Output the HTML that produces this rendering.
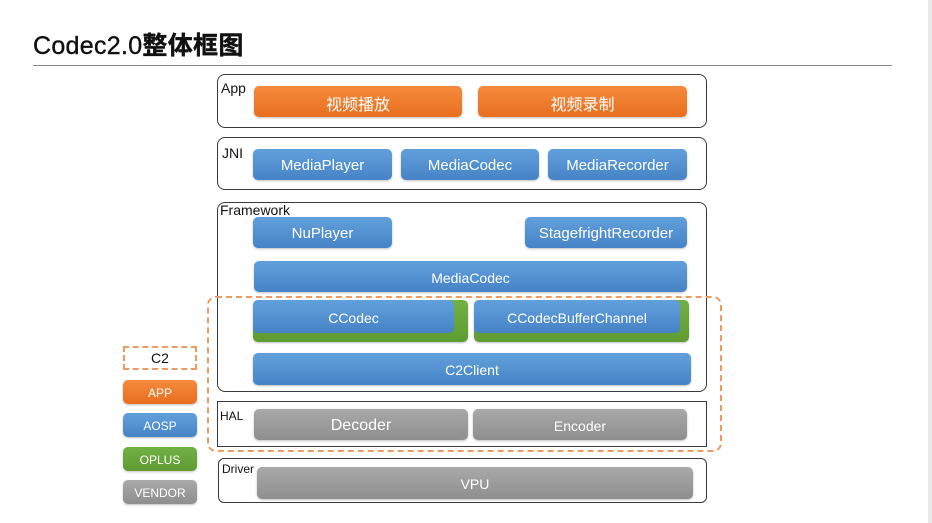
<!DOCTYPE html>
<html><head><meta charset="utf-8"><style>
*{margin:0;padding:0;box-sizing:border-box}
body{width:932px;height:523px;background:#fff;position:relative;overflow:hidden;font-family:"Liberation Sans","Noto Sans CJK SC",sans-serif}
.a{position:absolute}
.box{position:absolute;border:1px solid #3a3a3a;border-radius:8px;background:#fff}
.lbl{position:absolute;font-size:13px;color:#111}
.b{position:absolute;color:#fff;display:flex;align-items:center;justify-content:center;border-radius:5px;font-size:15px;box-shadow:0 1px 2px rgba(0,0,0,.25);padding-top:2px}
.bl{background:linear-gradient(#62a0dc,#4583c6)}
.or{background:linear-gradient(#f68a3c,#e86f1f)}
.gr{background:linear-gradient(#a9a9a9,#8e8e8e)}
.gn{background:linear-gradient(#71b043,#5e9c32)}
</style></head><body>
<div class="a" style="left:33px;top:26px;font-size:25px;color:#111;letter-spacing:0.3px;-webkit-text-stroke:0.4px #111">Codec2.0<b style="font-weight:bold">整体框图</b></div>
<div class="a" style="left:33px;top:65px;width:859px;height:1px;background:#888"></div>
<div class="a" style="left:928px;top:0;width:4px;height:523px;background:#e8e8e8"></div>

<div class="box" style="left:217px;top:74px;width:490px;height:54px"></div>
<div class="lbl" style="left:221px;top:80px;font-size:14px">App</div>
<div class="b or" style="left:254px;top:86px;width:208px;height:31px;font-size:16px">视频播放</div>
<div class="b or" style="left:478px;top:86px;width:209px;height:31px;font-size:16px">视频录制</div>

<div class="box" style="left:217px;top:137px;width:490px;height:53px"></div>
<div class="lbl" style="left:222px;top:145px;font-size:14px">JNI</div>
<div class="b bl" style="left:253px;top:149px;width:139px;height:31px">MediaPlayer</div>
<div class="b bl" style="left:401px;top:149px;width:138px;height:31px">MediaCodec</div>
<div class="b bl" style="left:548px;top:149px;width:139px;height:31px">MediaRecorder</div>

<div class="box" style="left:217px;top:202px;width:490px;height:190px"></div>
<div class="lbl" style="left:220px;top:202px;font-size:14px">Framework</div>
<div class="b bl" style="left:253px;top:217px;width:139px;height:31px">NuPlayer</div>
<div class="b bl" style="left:525px;top:217px;width:162px;height:31px">StagefrightRecorder</div>
<div class="b bl" style="left:254px;top:261px;width:433px;height:31px;font-size:14px">MediaCodec</div>

<div class="b gn" style="left:253px;top:300px;width:215px;height:42px"></div>
<div class="b bl" style="left:253px;top:300px;width:201px;height:33px;box-shadow:none;font-size:14px">CCodec</div>
<div class="b gn" style="left:474px;top:300px;width:215px;height:42px"></div>
<div class="b bl" style="left:474px;top:300px;width:206px;height:33px;box-shadow:none;font-size:14px">CCodecBufferChannel</div>
<div class="b bl" style="left:253px;top:353px;width:438px;height:32px;font-size:14px">C2Client</div>

<div class="a" style="left:217px;top:401px;width:490px;height:46px;border:1px solid #3a3a3a;background:#fff"></div>
<div class="lbl" style="left:220px;top:409px;font-size:12px">HAL</div>
<div class="b gr" style="left:254px;top:409px;width:214px;height:31px;font-size:16px">Decoder</div>
<div class="b gr" style="left:473px;top:409px;width:214px;height:31px;font-size:14px">Encoder</div>

<div class="a" style="left:207px;top:296px;width:515px;height:156px;border:2px dashed #ee9a60;border-radius:9px"></div>

<div class="box" style="left:218px;top:458px;width:489px;height:45px;border-radius:6px"></div>
<div class="lbl" style="left:222px;top:462px;font-size:12px">Driver</div>
<div class="b gr" style="left:257px;top:467px;width:436px;height:32px;font-size:14px">VPU</div>

<div class="a" style="left:123px;top:346px;width:74px;height:24px;border:2px dashed #ee9a60;display:flex;align-items:center;justify-content:center;font-size:14px;color:#111">C2</div>
<div class="b or" style="left:123px;top:380px;width:74px;height:24px;font-size:12px">APP</div>
<div class="b bl" style="left:123px;top:413px;width:74px;height:24px;font-size:12px">AOSP</div>
<div class="b gn" style="left:123px;top:447px;width:74px;height:24px;font-size:12px">OPLUS</div>
<div class="b gr" style="left:123px;top:480px;width:74px;height:24px;font-size:12px">VENDOR</div>
</body></html>
